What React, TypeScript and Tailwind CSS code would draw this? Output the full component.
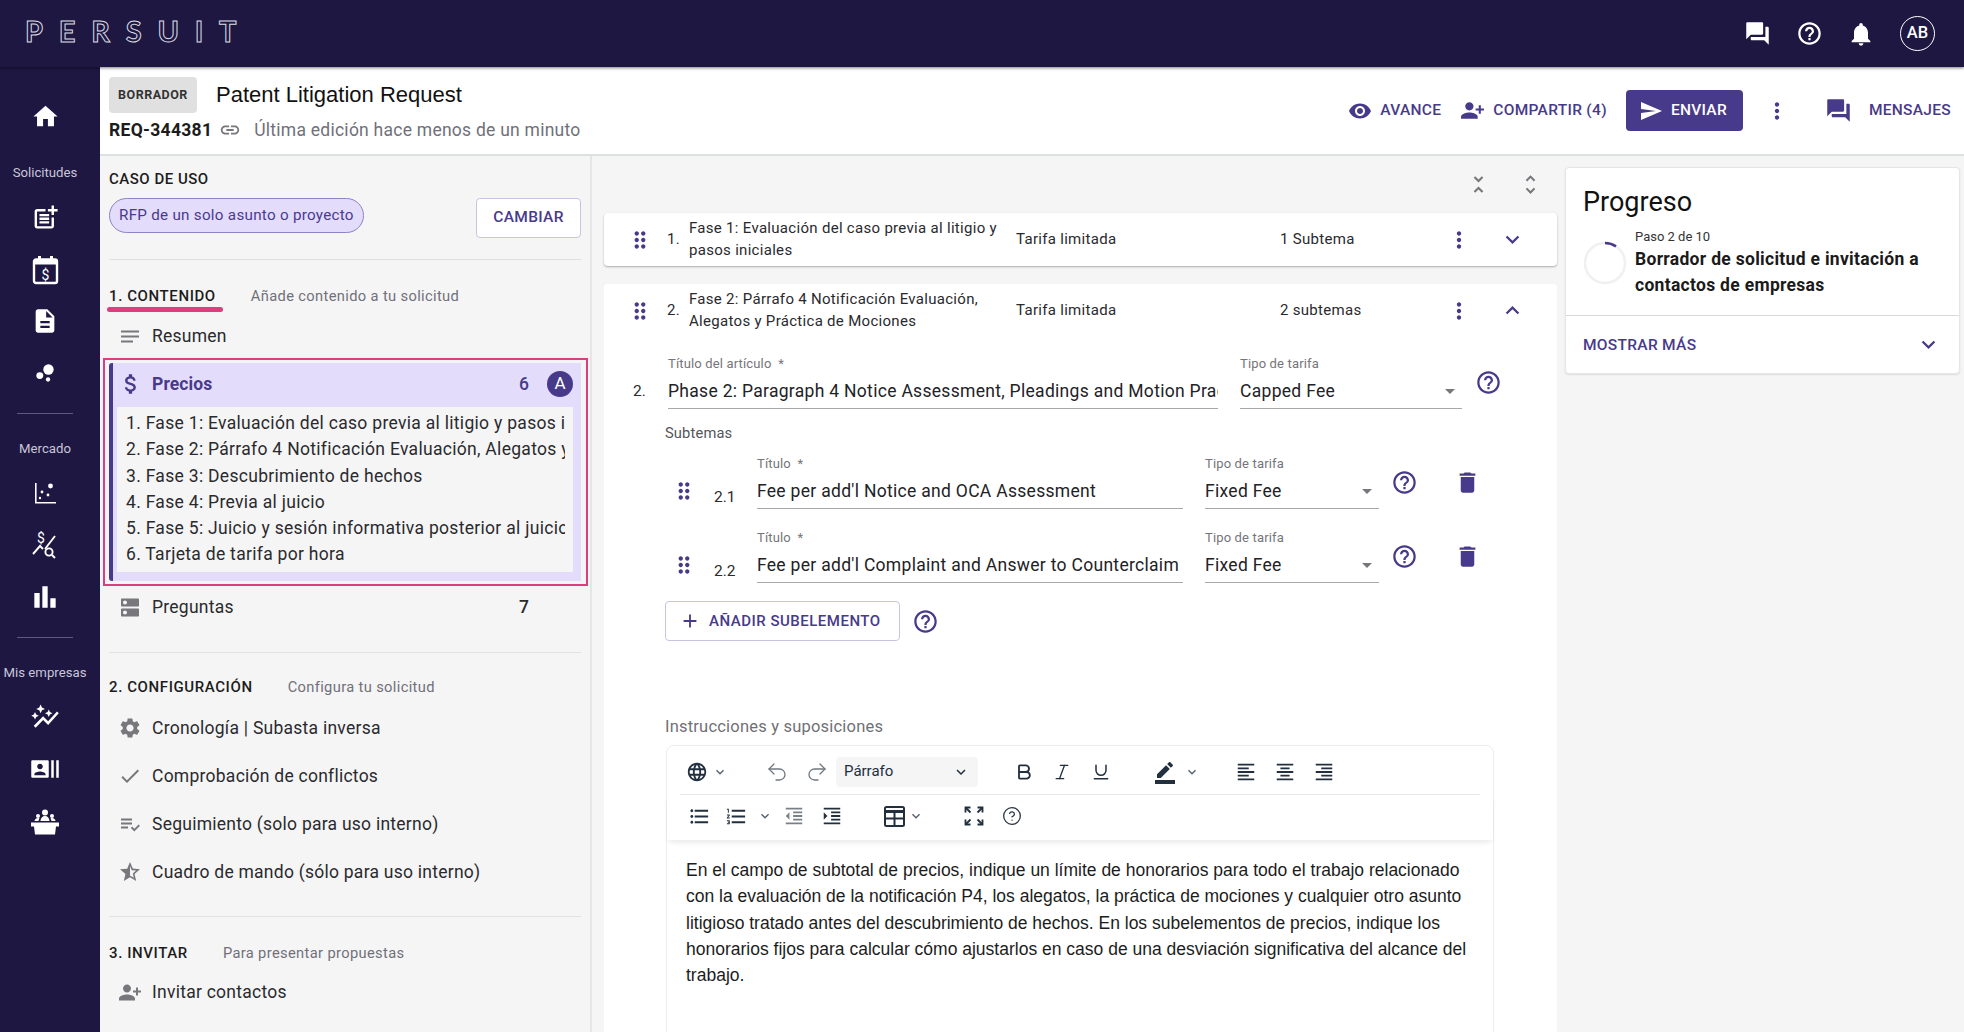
import type { ReactNode } from 'react';
import {
  MdAdd,
  MdArrowDropDown,
  MdAttachMoney,
  MdAutoGraph,
  MdBarChart,
  MdBorderColor,
  MdBubbleChart,
  MdCheck,
  MdDelete,
  MdDescription,
  MdDns,
  MdDragIndicator,
  MdExpandLess,
  MdExpandMore,
  MdForum,
  MdFormatAlignCenter,
  MdFormatAlignLeft,
  MdFormatAlignRight,
  MdFormatIndentDecrease,
  MdFormatIndentIncrease,
  MdFormatListBulleted,
  MdFormatListNumbered,
  MdHelpOutline,
  MdHome,
  MdLanguage,
  MdLink,
  MdMoreVert,
  MdNotes,
  MdNotifications,
  MdPersonAdd,
  MdPlaylistAddCheck,
  MdPostAdd,
  MdRecentActors,
  MdSend,
  MdSettings,
  MdStarHalf,
  MdUnfoldLess,
  MdUnfoldMore,
  MdVisibility,
} from 'react-icons/md';
import { Bold, CircleHelp, Italic, Redo2, Underline, Undo2 } from 'lucide-react';

function CalendarMoney() {
  return (
    <svg width="27" height="30" viewBox="0 0 27 30" fill="none">
      <rect x="2" y="4.5" width="23" height="23.5" rx="2" stroke="white" strokeWidth="2.4" />
      <rect x="2" y="4.5" width="23" height="5" fill="white" />
      <rect x="6" y="1" width="3" height="5" fill="white" />
      <rect x="18" y="1" width="3" height="5" fill="white" />
      <text x="13.5" y="25" textAnchor="middle" fontSize="14" fontFamily="Roboto, sans-serif" fill="white">
        $
      </text>
    </svg>
  );
}

function ScatterIcon() {
  return (
    <svg width="24" height="24" viewBox="0 0 24 24" fill="white">
      <path d="M2 2h1.6v19H23v1.6H2z" />
      <circle cx="17.5" cy="5" r="2.4" />
      <circle cx="9" cy="11" r="1.4" />
      <circle cx="15" cy="14" r="1.4" />
      <circle cx="7" cy="17" r="1.2" />
    </svg>
  );
}

function PriceSearchIcon() {
  return (
    <svg width="26" height="28" viewBox="0 0 26 28" fill="none" stroke="white" strokeWidth="1.9">
      <text x="9" y="12" textAnchor="middle" fontSize="14" fontFamily="Roboto, sans-serif" fill="white" stroke="none">
        $
      </text>
      <path d="M23 5 13 18" />
      <path d="M1 23 8 15l3 3" />
      <circle cx="17" cy="21" r="3.6" />
      <path d="m20 24 3 3" />
    </svg>
  );
}

function PodiumIcon() {
  return (
    <svg width="28" height="26" viewBox="0 0 28 26" fill="white">
      <circle cx="14" cy="3.5" r="3" />
      <circle cx="7" cy="7" r="2" />
      <circle cx="21" cy="7" r="2" />
      <path d="M9.5 12c0-3 2-5 4.5-5s4.500 2 4.500 5zM3.500 12c0-1.500 1.500-3 3.500-3 .8 0 1.200.2 1.500.4-.6.800-.9 1.600-1 2.600zM24.500 12c0-1.500-1.500-3-3.500-3-.8 0-1.200.2-1.500.4.600.800.900 1.600 1 2.600z" />
      <path d="M0 13.500h28v4H25l-1 8H4l-1-8H0z" />
    </svg>
  );
}

function TableIcon() {
  return (
    <svg width="21" height="21" viewBox="0 0 21 21" fill="none" stroke="currentColor" strokeWidth="2">
      <rect x="1" y="1" width="19" height="19" rx="1.500" />
      <path d="M1 5.500h19" strokeWidth="3" />
      <path d="M1 12.500h19M10.500 5v15" />
    </svg>
  );
}

function FullscreenIcon() {
  return (
    <svg width="20" height="20" viewBox="0 0 20 20" fill="none" stroke="currentColor" strokeWidth="1.800">
      <path d="M1.500 6.500v-5h5M18.500 6.500v-5h-5M1.500 13.500v5h5M18.500 13.500v5h-5" />
      <path d="M2 2l4.500 4.500M18 2l-4.500 4.500M2 18l4.500-4.500M18 18l-4.500-4.500" />
    </svg>
  );
}

function SideLabel({ children, className }: { children: ReactNode; className: string }) {
  return <div className={`text-[13.2px] leading-5 text-[#c9c6d8] text-center whitespace-nowrap ${className}`}>{children}</div>;
}

function SideBar() {
  return (
    <aside className="w-[100px] shrink-0 bg-[#1d1742] flex flex-col items-center pr-[10px] text-white">
      <MdHome size={29} className="mt-[35px]" />
      <SideLabel className="mt-[32px]">Solicitudes</SideLabel>
      <MdPostAdd size={29} className="mt-[20px]" />
      <div className="mt-[23px]"><CalendarMoney /></div>
      <MdDescription size={28} className="mt-[22px]" />
      <MdBubbleChart size={26} className="mt-[25px]" />
      <div className="w-[56px] h-px bg-[#5d5880] mt-[27px]" />
      <SideLabel className="mt-[25px]">Mercado</SideLabel>
      <div className="mt-[22px]"><ScatterIcon /></div>
      <div className="mt-[26px]"><PriceSearchIcon /></div>
      <MdBarChart size={32} className="mt-[22px]" />
      <div className="w-[56px] h-px bg-[#5d5880] mt-[24px]" />
      <SideLabel className="mt-[25px]">Mis empresas</SideLabel>
      <MdAutoGraph size={30} className="mt-[19px]" />
      <MdRecentActors size={30} className="mt-[22px]" />
      <div className="mt-[25px]"><PodiumIcon /></div>
    </aside>
  );
}

function SectionHead({ title, note, className }: { title: string; note: string; className: string }) {
  return (
    <div className={`flex h-5 items-center gap-[35px] ${className}`}>
      <span className="text-[15px] font-medium text-[#1c1c1c] tracking-[0.6px] whitespace-nowrap">{title}</span>
      <span className="text-[14.7px] tracking-[0.35px] text-[#70707a] whitespace-nowrap">{note}</span>
    </div>
  );
}

function NavRow({ icon, label, count, h = 'h-12' }: { icon: ReactNode; label: string; count?: string; h?: string }) {
  return (
    <div className={`flex items-center ${h} pl-[9px]`}>
      <span className="w-[24px] flex justify-center text-[#77777c]">{icon}</span>
      <span className="ml-[10px] text-[17.5px] tracking-[0.25px] text-[#2a2a2e]">{label}</span>
      {count && <span className="ml-auto mr-[52px] text-[17.5px] font-medium text-[#2a2a2e]">{count}</span>}
    </div>
  );
}

const phases = [
  '1. Fase 1: Evaluación del caso previa al litigio y pasos iniciales',
  '2. Fase 2: Párrafo 4 Notificación Evaluación, Alegatos y Práctica de Mociones',
  '3. Fase 3: Descubrimiento de hechos',
  '4. Fase 4: Previa al juicio',
  '5. Fase 5: Juicio y sesión informativa posterior al juicio',
  '6. Tarjeta de tarifa por hora',
];

function LeftPanel() {
  return (
    <section className="w-[492px] shrink-0 border-r-2 border-[#e4e6e6] pl-[9px] pr-[9px] bg-[#f5f5f5]">
      <div className="mt-[14px] h-[18px] flex items-center text-[15px] font-medium tracking-[0.5px] text-[#1c1c1c]">CASO DE USO</div>
      <div className="mt-[10px] flex justify-between items-start">
        <span className="h-[35px] flex items-center rounded-full border border-[#8e82c4] bg-[#e4dcfb] px-[9px] text-[15.2px] tracking-[0.28px] text-[#483a90] whitespace-nowrap">
          RFP de un solo asunto o proyecto
        </span>
        <button className="w-[105px] h-[40px] rounded border border-[#c9c4e2] bg-white text-[15.5px] font-medium tracking-[0.3px] text-[#483a8a]">CAMBIAR</button>
      </div>
      <div className="mt-[21px] h-px bg-[#dfdfdf]" />

      <SectionHead title="1. CONTENIDO" note="Añade contenido a tu solicitud" className="mt-[26px]" />
      <div className="mt-px -ml-[2px] h-[5px] w-[116px] rounded-sm bg-[#dc3f7e]" />
      <div className="mt-[8px] mb-[6px]">
        <NavRow icon={<MdNotes size={25} />} label="Resumen" h="h-8" />
      </div>

      <div className="-ml-[6px] w-[485px] h-[228px] border-2 border-[#dc3f7e] pt-[3px] pl-[4px] pr-[5px] pb-[3px]">
        <div className="h-full bg-[#e4dcfb] border-l-4 border-[#483a8a] rounded-l-[3px] flex flex-col">
          <div className="h-[44px] pb-[2px] flex items-center pl-[5px] shrink-0 text-[#483a8a]">
            <MdAttachMoney size={26} className="shrink-0" />
            <span className="ml-[8px] text-[17.5px] font-bold tracking-[0.1px]">Precios</span>
            <span className="ml-auto text-[17.5px] font-medium">6</span>
            <span className="ml-[18px] mr-[8px] w-[26px] h-[26px] rounded-full bg-[#483a8a] text-white flex items-center justify-center text-[17px]">A</span>
          </div>
          <div className="ml-[4px] mr-[8px] h-[165px] bg-[#f5f5f5] pl-[9px] pr-[8px] pt-[3px]">
            {phases.map((p) => (
              <div key={p} className="h-[26.3px] leading-[26.3px] text-[17.5px] tracking-[0.3px] text-[#2a2a2e] whitespace-nowrap overflow-hidden">
                {p}
              </div>
            ))}
          </div>
        </div>
      </div>

      <div className="mt-[5px]">
        <NavRow icon={<MdDns size={27} />} label="Preguntas" count="7" h="h-8" />
      </div>
      <div className="mt-[29px] h-px bg-[#e2e2e2]" />

      <SectionHead title="2. CONFIGURACIÓN" note="Configura tu solicitud" className="mt-[24px]" />
      <div className="mt-[7px]">
        <NavRow icon={<MdSettings size={26} />} label="Cronología | Subasta inversa" />
        <NavRow icon={<MdCheck size={26} />} label="Comprobación de conflictos" />
        <NavRow icon={<MdPlaylistAddCheck size={25} />} label="Seguimiento (solo para uso interno)" />
        <NavRow icon={<MdStarHalf size={28} />} label="Cuadro de mando (sólo para uso interno)" />
      </div>
      <div className="mt-[20px] h-px bg-[#e2e2e2]" />

      <SectionHead title="3. INVITAR" note="Para presentar propuestas" className="mt-[26px]" />
      <div className="mt-[13px]">
        <NavRow icon={<MdPersonAdd size={27} className="-scale-x-100" />} label="Invitar contactos" h="h-8" />
      </div>
    </section>
  );
}

function Field({ label, value, w, select, className = '' }: { label: string; value: string; w: string; select?: boolean; className?: string }) {
  return (
    <div className={`shrink-0 ${w} ${className}`}>
      <div className="h-4 leading-4 text-[13px] tracking-[0.15px] whitespace-pre text-[#75757a]">{label}</div>
      <div className="h-[37px] border-b border-[#a8a8a8] flex items-center pt-[2px] overflow-hidden text-[17.5px] tracking-[0.3px] text-[#222226] whitespace-nowrap">
        <span className={select ? '' : 'block overflow-hidden'}>{value}</span>
        {select && <MdArrowDropDown size={24} className="ml-auto text-[#77777c]" />}
      </div>
    </div>
  );
}

function SubItem({ num, value, className }: { num: string; value: string; className: string }) {
  return (
    <div className={`flex pl-[71px] ${className}`}>
      <MdDragIndicator size={26} className="text-[#483a8a] mt-[22px] -ml-[4px] shrink-0" />
      <span className="w-[42px] ml-[17px] mr-px mt-[31px] leading-5 text-[15.5px] text-[#2a2a2e]">{num}</span>
      <Field label="Título  *" value={value} w="w-[426px]" />
      <Field label="Tipo de tarifa" value="Fixed Fee" w="w-[174px]" select className="ml-[22px]" />
      <MdHelpOutline size={27} className="text-[#483a8a] ml-[12px] mt-[13px] shrink-0" />
      <MdDelete size={27} className="text-[#483a8a] ml-[36px] mt-[13px] shrink-0" />
    </div>
  );
}

function ItemHead({ num, lines, type, count, open }: { num: string; lines: string[]; type: string; count: string; open?: boolean }) {
  return (
    <div className="h-[53px] flex items-center text-[15px] tracking-[0.3px] text-[#2a2a2e]">
      <MdDragIndicator size={26} className="ml-[23px] text-[#483a8a] shrink-0" />
      <span className="ml-[14px] w-[22px] shrink-0">{num}</span>
      <div className="w-[327px] shrink-0 leading-[21.5px]">
        {lines.map((l) => (
          <div key={l} className="whitespace-nowrap">{l}</div>
        ))}
      </div>
      <span className="w-[264px] shrink-0">{type}</span>
      <span className="w-[166px] shrink-0">{count}</span>
      <MdMoreVert size={26} className="text-[#483a8a] shrink-0" />
      <span className="ml-[27px] text-[#483a8a]">{open ? <MdExpandLess size={27} /> : <MdExpandMore size={27} />}</span>
    </div>
  );
}

function ToolbarOne() {
  return (
    <div className="h-[49px] mx-[13px] pt-[3px] border-b border-[#e8e8e8] flex items-center text-[#222f3e]">
      <MdLanguage size={22} className="ml-[6px]" />
      <MdExpandMore size={16} className="ml-[4px] text-[#55606c]" />
      <Undo2 size={24} strokeWidth={1.300} className="ml-[37px] text-[#70787f]" />
      <Redo2 size={24} strokeWidth={1.300} className="ml-[16px] text-[#70787f]" />
      <div className="ml-[7px] w-[142px] h-[30px] rounded bg-[#f5f5f5] flex items-center px-[8px] text-[15px] text-[#222f3e]">
        Párrafo
        <MdExpandMore size={18} className="ml-auto" />
      </div>
      <Bold size={20} strokeWidth={2.200} className="ml-[36px]" />
      <Italic size={20} strokeWidth={1.600} className="ml-[18px]" />
      <Underline size={20} strokeWidth={1.800} className="ml-[19px]" />
      <MdBorderColor size={24} className="ml-[42px]" />
      <MdExpandMore size={16} className="ml-[7px] text-[#55606c]" />
      <MdFormatAlignLeft size={22} className="ml-[35px]" />
      <MdFormatAlignCenter size={22} className="ml-[17px]" />
      <MdFormatAlignRight size={22} className="ml-[17px]" />
    </div>
  );
}

function ToolbarTwo() {
  return (
    <div className="h-[45px] pb-[3px] flex items-center text-[#222f3e] shadow-[0_4px_6px_-2px_rgba(0,0,0,0.1)]">
      <MdFormatListBulleted size={23} className="ml-[21px]" />
      <MdFormatListNumbered size={23} className="ml-[14px]" />
      <MdExpandMore size={16} className="ml-[9px] text-[#55606c]" />
      <MdFormatIndentDecrease size={22} className="ml-[10px] text-[#7a8289]" />
      <MdFormatIndentIncrease size={22} className="ml-[16px]" />
      <span className="ml-[41px]"><TableIcon /></span>
      <MdExpandMore size={16} className="ml-[3px] text-[#55606c]" />
      <span className="ml-[40px]"><FullscreenIcon /></span>
      <CircleHelp size={20} strokeWidth={1.500} className="ml-[18px]" />
    </div>
  );
}

function Middle() {
  return (
    <section className="w-[973px] shrink-0 pl-[12px] pr-[8px] overflow-hidden">
      <div className="h-[57px] flex items-center justify-end pr-[14px] gap-[27px] text-[#77777c]">
        <MdUnfoldLess size={25} />
        <MdUnfoldMore size={25} />
      </div>
      <div className="bg-white rounded shadow-[0_1px_2px_rgba(0,0,0,0.3)]">
        <ItemHead num="1." lines={['Fase 1: Evaluación del caso previa al litigio y', 'pasos iniciales']} type="Tarifa limitada" count="1 Subtema" />
      </div>
      <div className="mt-[18px] bg-white rounded-t h-[760px]">
        <ItemHead num="2." lines={['Fase 2: Párrafo 4 Notificación Evaluación,', 'Alegatos y Práctica de Mociones']} type="Tarifa limitada" count="2 subtemas" open />

        <div className="mt-[19px] flex pl-[29px]">
          <span className="w-[35px] mt-[24px] text-[15.5px] text-[#2a2a2e]">2.</span>
          <Field label="Título del artículo  *" value="Phase 2: Paragraph 4 Notice Assessment, Pleadings and Motion Practice" w="w-[550px]" />
          <Field label="Tipo de tarifa" value="Capped Fee" w="w-[222px]" select className="ml-[22px]" />
          <MdHelpOutline size={27} className="text-[#483a8a] ml-[13px] mt-[13px] shrink-0" />
        </div>

        <div className="mt-[15px] ml-[61px] h-[18px] leading-[18px] text-[14.7px] tracking-[0.15px] text-[#55555a]">Subtemas</div>
        <SubItem num="2.1" value="Fee per add'l Notice and OCA Assessment" className="mt-[14px]" />
        <SubItem num="2.2" value="Fee per add'l Complaint and Answer to Counterclaim" className="mt-[21px]" />

        <div className="mt-[18px] ml-[61px] flex items-center">
          <button className="w-[235px] h-[40px] rounded border border-[#c9c4e2] flex items-center pl-[13px] text-[15px] font-medium tracking-[0.5px] text-[#483a8a]">
            <MdAdd size={22} />
            <span className="ml-[8px]">AÑADIR SUBELEMENTO</span>
          </button>
          <MdHelpOutline size={27} className="ml-[12px] text-[#483a8a]" />
        </div>

        <div className="mt-[76px] ml-[61px] h-5 leading-5 text-[16.5px] tracking-[0.2px] text-[#707075]">Instrucciones y suposiciones</div>
        <div className="mt-[8px] ml-[62px] w-[828px] h-[300px] rounded-lg border border-[#ececec]">
          <ToolbarOne />
          <ToolbarTwo />
          <div className="pt-[17px] pl-[19px] pr-[20px] text-[17.5px] leading-[26.3px] text-[#1c1c1c] font-['Liberation_Sans',sans-serif]">
            En el campo de subtotal de precios, indique un límite de honorarios para todo el trabajo relacionado con la evaluación de la notificación P4, los alegatos, la práctica de mociones y cualquier otro asunto litigioso tratado antes del descubrimiento de hechos. En los subelementos de precios, indique los honorarios fijos para calcular cómo ajustarlos en caso de una desviación significativa del alcance del trabajo.
          </div>
        </div>
      </div>
    </section>
  );
}

function ProgressCard() {
  return (
    <aside className="mt-[11px] w-[395px] h-[207px] bg-white rounded border border-[#e4e6e6] shadow-[0_1px_2px_rgba(0,0,0,0.1)] flex flex-col">
      <div className="h-[148px] border-b border-[#d8dada] pl-[17px]">
        <div className="mt-[18px] text-[27px] leading-8 text-[#111]">Progreso</div>
        <div className="mt-[11px] flex">
          <svg width="44" height="44" viewBox="0 0 44 44" fill="none" className="mt-[12px] shrink-0">
            <circle cx="22" cy="22" r="20" stroke="#f0f0f0" strokeWidth="2.5" />
            <path d="M22 2a20 20 0 0 1 11 3.400" stroke="#483a8a" strokeWidth="2.500" />
          </svg>
          <div className="ml-[8px]">
            <div className="text-[13px] leading-4 text-[#333]">Paso 2 de 10</div>
            <div className="mt-[1px] text-[17.5px] leading-[26.3px] font-bold tracking-[0.3px] text-[#1a1a1a] w-[310px]">Borrador de solicitud e invitación a contactos de empresas</div>
          </div>
        </div>
      </div>
      <div className="flex-1 flex items-center pl-[17px] pr-[17px] text-[#483a8a]">
        <span className="mt-[3px] text-[15.5px] font-medium tracking-[0.3px]">MOSTRAR MÁS</span>
        <MdExpandMore size={27} className="ml-auto" />
      </div>
    </aside>
  );
}

function TopBar() {
  return (
    <header className="h-[67px] shrink-0 bg-[#1d1742] flex items-center relative z-10 shadow-[0_1px_3px_rgba(0,0,0,0.5)] text-white">
      <span className="ml-[25px] mb-[5px] text-[29px] font-bold tracking-[15.8px] text-transparent [-webkit-text-stroke:1px_#dcdce2] font-['Lato',sans-serif]">PERSUIT</span>
      <div className="ml-auto flex items-center">
        <MdForum size={27} />
        <MdHelpOutline size={27} className="ml-[25px]" />
        <MdNotifications size={28} className="ml-[24px]" />
        <span className="ml-[25px] mr-[29px] w-[35px] h-[35px] rounded-full border border-white flex items-center justify-center text-[16.5px] font-medium">AB</span>
      </div>
    </header>
  );
}

function SubHeader() {
  return (
    <div className="h-[89px] shrink-0 bg-white border-b-2 border-[#dde0e0] flex pl-[9px] pr-[13px]">
      <div>
        <div className="mt-[10px] flex items-center">
          <span className="w-[88px] h-[36px] rounded bg-[#e0e0e0] flex items-center justify-center text-[12.5px] font-bold tracking-[0.5px] text-[#333]">BORRADOR</span>
          <span className="ml-[19px] mb-[2px] text-[22px] text-[#111] font-['Liberation_Sans',sans-serif]">Patent Litigation Request</span>
        </div>
        <div className="mt-[5px] flex items-center h-[24px]">
          <span className="text-[17.5px] font-bold tracking-[0.3px] text-[#1c1c1c]">REQ-344381</span>
          <MdLink size={22} className="ml-[7px] text-[#77777c]" />
          <span className="ml-[13px] text-[17.5px] tracking-[0.25px] text-[#70707a]">Última edición hace menos de un minuto</span>
        </div>
      </div>
      <div className="ml-auto flex items-center text-[#483a8a] text-[15.500px] font-medium tracking-[0.3px]">
        <MdVisibility size={24} />
        <span className="ml-[8px]">AVANCE</span>
        <MdPersonAdd size={25} className="ml-[19px] -scale-x-100" />
        <span className="ml-[8px]">COMPARTIR (4)</span>
        <button className="ml-[19px] w-[117px] h-[41px] rounded bg-[#483a8a] text-white flex items-center pl-[13px] font-medium">
          <MdSend size={24} />
          <span className="ml-[8px]">ENVIAR</span>
        </button>
        <MdMoreVert size={26} className="ml-[21px]" />
        <MdForum size={27} className="ml-[35px]" />
        <span className="ml-[17px]">MENSAJES</span>
      </div>
    </div>
  );
}

export default function App() {
  return (
    <div className="w-[1964px] h-[1032px] overflow-hidden flex flex-col bg-[#f5f5f5] font-['Roboto',sans-serif]">
      <TopBar />
      <div className="flex-1 flex min-h-0">
        <SideBar />
        <div className="flex-1 flex flex-col min-w-0">
          <SubHeader />
          <div className="flex-1 flex min-h-0">
            <LeftPanel />
            <Middle />
            <ProgressCard />
          </div>
        </div>
      </div>
    </div>
  );
}
